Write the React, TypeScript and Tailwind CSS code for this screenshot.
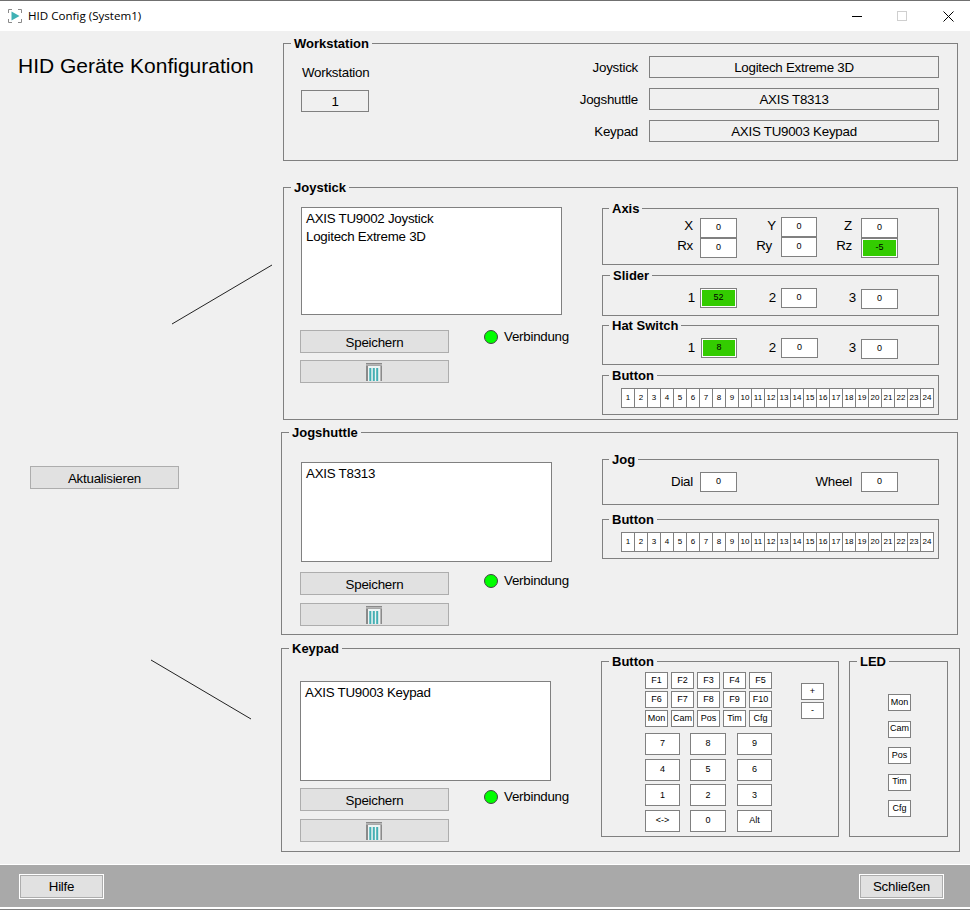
import React from "react";

const FONT = "[font-family:'Liberation_Sans',Arial,sans-serif]";
const BODY = "text-[13.33px] tracking-[-0.25px]";

function Group({ label, className = "", children, legendX = "left-[7px]" }: { label: string; className?: string; legendX?: string; children?: React.ReactNode }) {
  return (
    <div className={`relative border border-[#808080] ${className}`}>
      <span className={`absolute -top-[8px] ${legendX} bg-[#f0f0f0] px-[3px] text-[13px] leading-[16px] font-bold whitespace-nowrap text-black`}>{label}</span>
      {children}
    </div>
  );
}

function Btn({ children, className = "" }: { children?: React.ReactNode; className?: string }) {
  return <div className={`flex items-center justify-center border border-[#adadad] bg-[#e1e1e1] text-black ${BODY} ${className}`}>{children}</div>;
}

function Trash() {
  return (
    <svg width="16" height="18" viewBox="0 0 16 18" className="mr-[2px]">
      <rect x="0" y="0" width="16" height="1.5" fill="#8a8a8a" />
      <rect x="0" y="2" width="16" height="1" fill="#a8a8a8" />
      <rect x="2" y="3" width="12" height="15" fill="#eef4f4" />
      <rect x="0" y="3" width="2" height="15" fill="#8a8a8a" />
      <rect x="14.5" y="3" width="1.5" height="15" fill="#8a8a8a" />
      <rect x="3.3" y="5" width="2" height="13" fill="#45b0b4" />
      <rect x="6.8" y="5" width="2" height="13" fill="#45b0b4" />
      <rect x="10.2" y="5" width="2" height="13" fill="#45b0b4" />
    </svg>
  );
}

function SaveButtons({ gap = "gap-[7px]" }: { gap?: string }) {
  return (
    <div className={`flex w-[149px] shrink-0 flex-col ${gap}`}>
      <Btn className="h-[23px] pt-[2px]">Speichern</Btn>
      <Btn className="h-[23px]"><Trash /></Btn>
    </div>
  );
}

function Connection({ className = "" }: { className?: string }) {
  return (
    <div className={`flex h-[14px] items-center self-start whitespace-nowrap leading-[16px] ${BODY} ${className}`}>
      <span className="mr-[6px] h-[14px] w-[14px] shrink-0 rounded-full border border-[#444] bg-[#00ff00]" />
      Verbindung
    </div>
  );
}

function Val({ v, active, className = "w-[37px]" }: { v: string; active?: boolean; className?: string }) {
  return (
    <div className={`flex h-[20px] items-center justify-center border border-[#808080] bg-white text-[9px] ${active ? "p-px" : ""} ${className}`}>
      {active ? <div className="flex h-full w-full items-center justify-center bg-[#33cc00]">{v}</div> : v}
    </div>
  );
}

function Field({ label, v, active, boxClass = "w-[37px]", pr = "pr-[7px]", labelY = "" }: { label: string; v: string; active?: boolean; boxClass?: string; pr?: string; labelY?: string }) {
  return (
    <>
      <span className={`text-right leading-[16px] ${BODY} ${pr} ${labelY}`}>{label}</span>
      <Val v={v} active={active} className={boxClass} />
    </>
  );
}

function ListBox({ items, className = "" }: { items: string[]; className?: string }) {
  return (
    <div className={`border border-[#808080] bg-white px-[4px] py-[2px] leading-[18px] ${BODY} ${className}`}>
      {items.map((i) => <div key={i}>{i}</div>)}
    </div>
  );
}

function ButtonStrip() {
  const nums = Array.from({ length: 24 }, (_, i) => i + 1);
  return (
    <Group label="Button" legendX="left-[6px]" className="h-[40px] w-[337px] shrink-0">
      <div className="ml-[18px] mt-[12px] flex w-[313px] border-t border-l border-b border-[#808080]">
        {nums.map((n) => (
          <div key={n} className="flex h-[18px] w-[13px] items-center justify-center border-r border-[#808080] bg-white text-[8px]">{n}</div>
        ))}
      </div>
    </Group>
  );
}

function Key({ t, className = "w-[23px] h-[17px]" }: { t: string; className?: string }) {
  return <div className={`flex items-center justify-center border border-[#808080] bg-white text-[9px] ${className}`}>{t}</div>;
}

export default function App() {
  const fn = ["F1", "F2", "F3", "F4", "F5", "F6", "F7", "F8", "F9", "F10", "Mon", "Cam", "Pos", "Tim", "Cfg"];
  const pad = ["7", "8", "9", "4", "5", "6", "1", "2", "3", "<->", "0", "Alt"];
  const up = "-translate-y-[2px]";
  return (
    <div className={`flex h-[911px] w-[970px] flex-col overflow-hidden bg-white text-black ${FONT}`}>
      {/* Title bar */}
      <div className="flex h-[31px] shrink-0 items-center border-t border-[#707070] bg-white">
        <svg className="ml-[8px]" width="14" height="14" viewBox="0 0 14 14" fill="none">
          <path d="M0.5 4V0.5H4M10 0.5H13.5V4M13.5 10V13.5H10M4 13.5H0.5V10" stroke="#8a8a8a" strokeWidth="1" />
          <path d="M3.5 2.5L11.5 7L3.5 11.5Z" fill="#3fb1b5" />
        </svg>
        <span className="ml-[6px] text-[11.6px] [font-family:'Open_Sans',sans-serif]">HID Config (System1)</span>
        <div className="ml-auto flex items-center">
          <svg width="10" height="10" viewBox="0 0 10 10" className="mr-[35px]"><path d="M0 5.5H10" stroke="#000" /></svg>
          <svg width="10" height="10" viewBox="0 0 10 10" className="mr-[36px]"><rect x="0.5" y="0.5" width="9" height="9" fill="none" stroke="#cfcfcf" /></svg>
          <svg width="11" height="11" viewBox="0 0 11 11" className="mr-[16px]"><path d="M0.5 0.5L10.5 10.5M10.5 0.5L0.5 10.5" stroke="#000" /></svg>
        </div>
      </div>

      {/* Body */}
      <div className="flex h-[833px] shrink-0 bg-[#f0f0f0]">
        {/* Left column */}
        <div className="relative w-[281px] shrink-0">
          <h1 className="ml-[18px] mt-[21px] text-[21px] leading-[28px] font-normal">HID Geräte Konfiguration</h1>
          <svg className="absolute left-0 top-0" width="281" height="833" fill="none">
            <path d="M272 234L172 293M151 629L251 688" stroke="#222" />
          </svg>
          <Btn className="ml-[30px] mt-[386px] h-[23px] w-[149px] pt-[2px]">Aktualisieren</Btn>
        </div>

        {/* Right column */}
        <div className="flex flex-col pt-[12px]">
          {/* Workstation */}
          <Group label="Workstation" className="ml-[2px] flex h-[118px] w-[675px] pl-[17px] pr-[18px] pt-[12px]">
            <div className="flex flex-col">
              <span className={`ml-[1px] mt-[9px] leading-[16px] ${BODY}`}>Workstation</span>
              <div className={`mt-[9px] flex h-[22px] w-[68px] items-center justify-center border border-[#808080] pt-px ${BODY}`}>1</div>
            </div>
            <div className="ml-auto grid grid-cols-[auto_290px] content-start items-center gap-x-[11px] gap-y-[10px]">
              {[["Joystick", "Logitech Extreme 3D"], ["Jogshuttle", "AXIS T8313"], ["Keypad", "AXIS TU9003 Keypad"]].map(([l, v]) => (
                <React.Fragment key={l}>
                  <span className={`pt-px text-right ${BODY}`}>{l}</span>
                  <div className={`flex h-[22px] items-center justify-center border border-[#808080] pt-px ${BODY}`}>{v}</div>
                </React.Fragment>
              ))}
            </div>
          </Group>

          {/* Joystick */}
          <Group label="Joystick" className="ml-[2px] mt-[26px] flex h-[233px] w-[675px] pl-[16px] pr-[18px]">
            <div className="flex w-[262px] shrink-0 flex-col">
              <ListBox items={["AXIS TU9002 Joystick", "Logitech Extreme 3D"]} className="ml-px mt-[19px] h-[108px] w-[261px]" />
              <div className="mt-[15px] flex">
                <SaveButtons />
                <Connection className="ml-[35px]" />
              </div>
            </div>
            <div className="ml-auto flex w-[337px] flex-col pt-[20px]">
              <Group label="Axis" legendX="left-[6px]" className="h-[57px]">
                <div className="ml-[53px] mt-[9px] grid grid-cols-[44px_37px_44px_36px_44px_37px] items-center">
                  <Field label="X" v="0" labelY={up} />
                  <Field label="Y" v="0" boxClass="w-[36px] -translate-y-px" pr="pr-[5px]" labelY={up} />
                  <Field label="Z" v="0" pr="pr-[9px]" labelY={up} />
                  <Field label="Rx" v="0" labelY={up} />
                  <Field label="Ry" v="0" boxClass="w-[36px] -translate-y-px" pr="pr-[9px]" labelY={up} />
                  <Field label="Rz" v="-5" active pr="pr-[9px]" labelY={up} />
                </div>
              </Group>
              <Group label="Slider" legendX="left-[7px]" className="mt-[10px] h-[41px]">
                <div className="ml-[53px] mt-[12px] grid grid-cols-[44px_37px_44px_36px_44px_37px] items-center">
                  <Field label="1" v="52" active pr="pr-[5px]" />
                  <Field label="2" v="0" boxClass="w-[36px]" pr="pr-[5px]" />
                  <Field label="3" v="0" boxClass="w-[37px] translate-y-px" pr="pr-[5px]" />
                </div>
              </Group>
              <Group label="Hat Switch" legendX="left-[6px]" className="mt-[9px] h-[40px]">
                <div className="ml-[54px] mt-[12px] grid grid-cols-[44px_36px_44px_37px_43px_37px] items-center">
                  <Field label="1" v="8" active boxClass="w-[36px]" pr="pr-[6px]" />
                  <Field label="2" v="0" pr="pr-[5px]" />
                  <Field label="3" v="0" boxClass="w-[37px] translate-y-px" pr="pr-[5px]" />
                </div>
              </Group>
              <div className="mt-[10px]"><ButtonStrip /></div>
            </div>
          </Group>

          {/* Jogshuttle */}
          <Group label="Jogshuttle" className="mt-[12px] flex h-[203px] w-[677px] pl-[18px] pr-[18px]">
            <div className="flex w-[252px] shrink-0 flex-col">
              <ListBox items={["AXIS T8313"]} className="ml-px mt-[29px] h-[100px] w-[251px]" />
              <div className="mt-[10px] flex">
                <SaveButtons gap="gap-[8px]" />
                <Connection className="ml-[35px] mt-[2px]" />
              </div>
            </div>
            <div className="ml-auto flex w-[337px] flex-col pt-[26px]">
              <Group label="Jog" legendX="left-[6px]" className="h-[46px]">
                <div className="ml-[53px] mt-[12px] grid grid-cols-[44px_37px_124px_37px] items-center">
                  <Field label="Dial" v="0" />
                  <Field label="Wheel" v="0" pr="pr-[9px]" />
                </div>
              </Group>
              <div className="mt-[14px]"><ButtonStrip /></div>
            </div>
          </Group>

          {/* Keypad */}
          <Group label="Keypad" className="mt-[13px] flex h-[204px] w-[679px] pl-[18px]">
            <div className="flex w-[251px] shrink-0 flex-col">
              <ListBox items={["AXIS TU9003 Keypad"]} className="mt-[32px] h-[100px] w-[251px]" />
              <div className="mt-[7px] flex">
                <SaveButtons gap="gap-[8px]" />
                <Connection className="ml-[35px] mt-[2px]" />
              </div>
            </div>
            <div className="ml-[50px] mt-[12px] flex gap-[10px]">
              <Group label="Button" className="flex h-[176px] w-[238px] flex-col pl-[43px] pt-[10px]">
                <div className="flex">
                  <div className="grid grid-cols-[repeat(5,23px)] gap-x-[3px] gap-y-[2px]">
                    {fn.map((f) => <Key key={f} t={f} />)}
                  </div>
                  <div className="ml-[29px] mt-[11px] flex flex-col gap-[2px]">
                    <Key t="+" />
                    <Key t="-" />
                  </div>
                </div>
                <div className="mt-[6px] grid grid-cols-[45px_47px_35px] gap-y-[3.67px]">
                  {pad.map((p, i) => <Key key={p} t={p} className={`h-[22px] ${i % 3 === 1 ? "w-[36px]" : "w-[35px]"}`} />)}
                </div>
              </Group>
              <Group label="LED" className="flex h-[176px] w-[99px] flex-col gap-[9.5px] pl-[38px] pt-[32px]">
                {["Mon", "Cam", "Pos", "Tim", "Cfg"].map((f) => <Key key={f} t={f} />)}
              </Group>
            </div>
          </Group>
        </div>
      </div>

      {/* Footer */}
      <div className="flex h-[43px] shrink-0 items-center justify-between border-t border-white bg-[#a9a9a9] pl-[19px] pr-[26px]">
        {["Hilfe", "Schließen"].map((t) => (
          <div key={t} className="border border-white">
            <Btn className="h-[23px] w-[83px] pt-[2px]">{t}</Btn>
          </div>
        ))}
      </div>
      <div className="h-[2px] shrink-0 bg-white" />
      <div className="h-px shrink-0 bg-[#808080]" />
    </div>
  );
}
